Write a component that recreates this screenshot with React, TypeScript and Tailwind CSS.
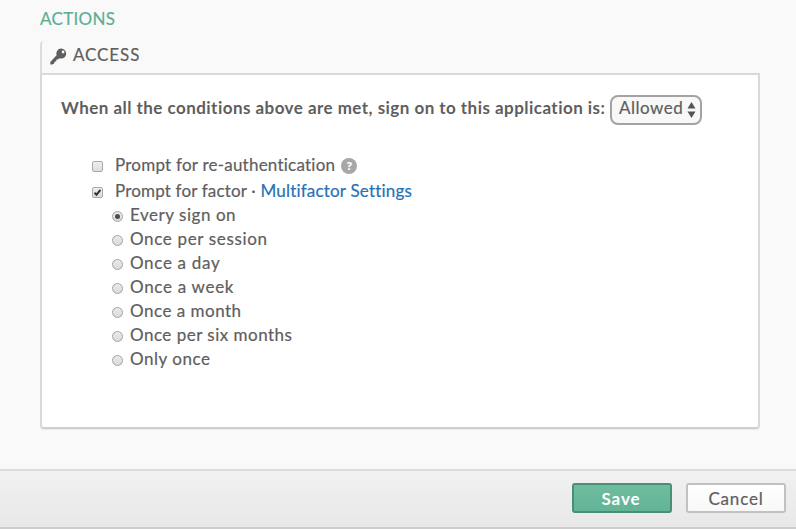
const frequencies = [
  { label: 'Every sign on', tracking: 'tracking-[0.54px]' },
  { label: 'Once per session', tracking: 'tracking-[0.66px]' },
  { label: 'Once a day', tracking: 'tracking-[0.68px]' },
  { label: 'Once a week', tracking: 'tracking-[0.7px]' },
  { label: 'Once a month', tracking: 'tracking-[0.5px]' },
  { label: 'Once per six months', tracking: 'tracking-[0.49px]' },
  { label: 'Only once', tracking: 'tracking-[0.52px]' },
];

function KeyIcon() {
  return (
    <svg className="mt-px h-[17px] w-[17px] shrink-0" viewBox="0 0 17 17" fill="none">
      <path
        fill="#5e5e5e"
        fillRule="evenodd"
        d="M11.2.6a5 5 0 1 1-.1 10 5 5 0 0 1-1.7-.3l-1 1-1.9.3-.2 1.7-1.7.4-.4 1.7-2 1.2H.3v-2.700L6.600 7.300A5 5 0 0 1 11.200.600Zm1.900 2a1.400 1.400 0 1 0 0 2.800 1.400 1.400 0 0 0 0-2.800Z"
      />
    </svg>
  );
}

function Checkbox({ checked = false }: { checked?: boolean }) {
  return (
    <span
      role="checkbox"
      aria-checked={checked}
      className="flex h-[11px] w-[11px] shrink-0 items-center justify-center rounded-[2px] border border-[#a9a9a9] bg-linear-to-b from-[#efefef] to-[#dddddd]"
    >
      {checked && (
        <svg className="h-[9px] w-[9px] shrink-0" viewBox="0 0 9 9" fill="none">
          <path d="M1.500 4.800 3.500 6.700 7.400 1.800" stroke="#333" strokeWidth="2" />
        </svg>
      )}
    </span>
  );
}

function Radio({ checked = false }: { checked?: boolean }) {
  return (
    <span
      role="radio"
      aria-checked={checked}
      className="flex h-[11px] w-[11px] shrink-0 items-center justify-center rounded-full border border-[#a3a3a3] bg-linear-to-b from-[#ebebeb] to-[#dadada]"
    >
      {checked && <span className="h-[5px] w-[5px] rounded-full bg-[#4d4d4d]" />}
    </span>
  );
}

export default function App() {
  return (
    <div className="flex h-[529px] w-[796px] flex-col overflow-hidden bg-[#f9f9f9] font-['Lato','Liberation_Sans',sans-serif] text-[17px] leading-6 whitespace-nowrap text-[#5e5e5e] antialiased [-webkit-text-stroke:0.2px]">
      <main className="flex h-[469px] shrink-0 flex-col pl-10">
        <h2 className="mt-[7px] h-6 tracking-[0.3px] text-[#5fae92]">ACTIONS</h2>
        <section className="mt-[10px] w-[720px]">
          <header className="flex h-8 items-start rounded-tl border-l-2 border-[#dcdcdc] pt-[2px] pl-2">
            <div className="pt-[4px]">
              <KeyIcon />
            </div>
            <h3 className="ml-[6px] tracking-[0.9px]">ACCESS</h3>
          </header>
          <div className="h-[356px] rounded-b-[4px] border-2 border-[#d9d9d9] border-b-[#cfcfcf] bg-white shadow-[0_1px_0_#ececec]">
            <div className="mt-5 flex h-[30px] pl-[19px]">
              <strong className="mt-[1px] w-[549px] font-bold tracking-[0.46px] [-webkit-text-stroke:0px]">
                When all the conditions above are met, sign on to this application is:
              </strong>
              <div className="flex h-[30px] w-[92px] shrink-0 items-center rounded-[8px] border-2 border-[#a3a3a3] bg-[#f8f8f8] pl-[7px]">
                <span className="-mt-[5px] w-[68px] tracking-[0.5px]">Allowed</span>
                <svg className="h-4 w-[9px] shrink-0" viewBox="0 0 9 16">
                  <path fill="#555" d="M4.500 0 8.500 6.500H.500ZM.500 9.500h8L4.500 16Z" />
                </svg>
              </div>
            </div>
            <div className="mt-7 pl-[50px]">
              <div className="flex h-[26px] items-center">
                <Checkbox />
                <span className="ml-3 -mt-[2px] tracking-[0.23px]">Prompt for re-authentication</span>
                <span className="ml-[6px] flex h-4 w-4 items-center justify-center rounded-full bg-[#a7a7a7] text-[12px] leading-none font-black text-white">
                  ?
                </span>
              </div>
              <div className="flex h-[26px] items-center">
                <Checkbox checked />
                <span className="ml-3 -mt-[2px] tracking-[0.17px]">
                  Prompt for factor · <a className="tracking-[0.2px] text-[#2672b5]">Multifactor Settings</a>
                </span>
              </div>
              <div className="-mt-[1px] pl-5" role="radiogroup">
                {frequencies.map((item, index) => (
                  <div key={item.label} className="flex h-6 items-center">
                    <Radio checked={index === 0} />
                    <span className={`ml-[7px] -mt-[2px] ${item.tracking}`}>{item.label}</span>
                  </div>
                ))}
              </div>
            </div>
          </div>
        </section>
      </main>
      <footer className="flex h-[60px] shrink-0 justify-end gap-[14px] border-t-2 border-b-2 border-t-[#dcdcdc] border-b-[#cdcdcd] bg-linear-to-b from-[#f1f1f1] to-[#e8e8e8] pt-3 pr-[10px]">
        <button className="h-[30px] w-[100px] rounded-[3px] border-2 border-[#4a8f75] bg-linear-to-b from-[#6fbd9f] to-[#63b396] pt-[2px] pr-[2px] leading-6 font-bold tracking-[0.9px] text-white [-webkit-text-stroke:0px]">
          Save
        </button>
        <button className="h-[30px] w-[100px] rounded-[3px] border-2 border-[#c1c1c1] bg-linear-to-b from-white to-[#f8f8f8] pt-[2px] leading-6 tracking-[0.8px]">
          Cancel
        </button>
      </footer>
    </div>
  );
}
